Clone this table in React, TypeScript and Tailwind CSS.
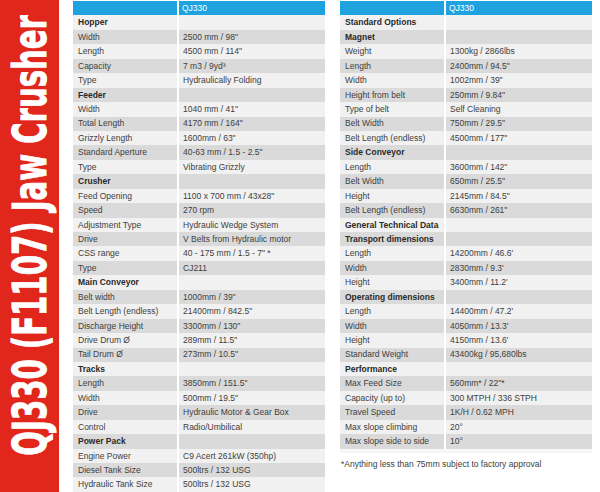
type Row = [string, string?];

const left: Row[] = [
  ["Hopper"],
  ["Width", "2500 mm / 98\""],
  ["Length", "4500 mm / 114\""],
  ["Capacity", "7 m3 / 9yd³"],
  ["Type", "Hydraulically Folding"],
  ["Feeder"],
  ["Width", "1040 mm / 41\""],
  ["Total Length", "4170 mm / 164\""],
  ["Grizzly Length", "1600mm / 63\""],
  ["Standard Aperture", "40-63 mm / 1.5 - 2.5\""],
  ["Type", "Vibrating Grizzly"],
  ["Crusher"],
  ["Feed Opening", "1100 x 700 mm / 43x28\""],
  ["Speed", "270 rpm"],
  ["Adjustment Type", "Hydraulic Wedge System"],
  ["Drive", "V Belts from Hydraulic motor"],
  ["CSS range", "40 - 175 mm / 1.5 - 7\" *"],
  ["Type", "CJ211"],
  ["Main Conveyor"],
  ["Belt width", "1000mm / 39\""],
  ["Belt Length (endless)", "21400mm / 842.5\""],
  ["Discharge Height", "3300mm / 130\""],
  ["Drive Drum Ø", "289mm / 11.5\""],
  ["Tail Drum Ø", "273mm / 10.5\""],
  ["Tracks"],
  ["Length", "3850mm / 151.5\""],
  ["Width", "500mm / 19.5\""],
  ["Drive", "Hydraulic Motor & Gear Box"],
  ["Control", "Radio/Umbilical"],
  ["Power Pack"],
  ["Engine Power", "C9 Acert 261kW (350hp)"],
  ["Diesel Tank Size", "500ltrs / 132 USG"],
  ["Hydraulic Tank Size", "500ltrs / 132 USG"],
];

const right: Row[] = [
  ["Standard Options"],
  ["Magnet"],
  ["Weight", "1300kg / 2866lbs"],
  ["Length", "2400mm / 94.5\""],
  ["Width", "1002mm / 39\""],
  ["Height from belt", "250mm / 9.84\""],
  ["Type of belt", "Self Cleaning"],
  ["Belt Width", "750mm / 29.5\""],
  ["Belt Length (endless)", "4500mm / 177\""],
  ["Side Conveyor"],
  ["Length", "3600mm / 142\""],
  ["Belt Width", "650mm / 25.5\""],
  ["Height", "2145mm / 84.5\""],
  ["Belt Length (endless)", "6630mm / 261\""],
  ["General Technical Data"],
  ["Transport dimensions"],
  ["Length", "14200mm / 46.6'"],
  ["Width", "2830mm / 9.3'"],
  ["Height", "3400mm / 11.2'"],
  ["Operating dimensions"],
  ["Length", "14400mm / 47.2'"],
  ["Width", "4050mm / 13.3'"],
  ["Height", "4150mm / 13.6'"],
  ["Standard Weight", "43400kg / 95,680lbs"],
  ["Performance"],
  ["Max Feed Size", "560mm* / 22\"*"],
  ["Capacity (up to)", "300 MTPH / 336 STPH"],
  ["Travel Speed", "1K/H / 0.62 MPH"],
  ["Max slope climbing", "20°"],
  ["Max slope side to side", "10°"],
];

function SpecTable({ rows }: { rows: Row[] }) {
  return (
    <div className="flex w-[252px] flex-col">
      <div className="grid h-[14.45px] grid-cols-[104px_146px] gap-x-[2px]">
        <div className="bg-[#1fa3df]" />
        <div className="flex items-center bg-[#1fa3df] pl-[3px] text-white">QJ330</div>
      </div>
      {rows.map(([label, value], i) => {
        const bg = i % 2 === 0 ? "bg-[#f1f1f1]" : "bg-[#dadada]";
        return (
          <div key={i} className="grid h-[14.45px] grid-cols-[104px_146px] gap-x-[2px]">
            <div
              className={`flex items-center whitespace-nowrap pl-[5px] ${bg} ${
                value === undefined ? "font-bold text-[#2a2a2a]" : "text-[#404040]"
              }`}
            >
              {label}
            </div>
            <div className={`flex items-center whitespace-nowrap pl-[4px] text-[#404040] ${bg}`}>
              {value ?? ""}
            </div>
          </div>
        );
      })}
    </div>
  );
}

export default function App() {
  return (
    <div className="flex h-[492px] w-[600px] overflow-hidden bg-white font-['Liberation_Sans',Arial,sans-serif] text-[8.5px] leading-none">
      <div className="flex h-full w-[59px] shrink-0 items-center justify-center overflow-hidden bg-[#e1261c]">
        <div className="block shrink-0 whitespace-nowrap font-['DejaVu_Sans',sans-serif] text-[47px] font-bold leading-none text-white [-webkit-text-stroke:1px_white] [transform:translateY(-11px)_rotate(180deg)_scaleY(0.62)] [writing-mode:vertical-rl]">
          QJ330 (F1107) Jaw Crusher
        </div>
      </div>
      <div className="ml-[14px] pt-[1px]">
        <SpecTable rows={left} />
      </div>
      <div className="ml-[15px] flex flex-col pt-[1px]">
        <SpecTable rows={right} />
        <div className="h-[4px] w-[252px] bg-[#f7f7f7]" />
        <div className="mt-[7px] pl-[1px] text-[#404040]">
          *Anything less than 75mm subject to factory approval
        </div>
      </div>
    </div>
  );
}
